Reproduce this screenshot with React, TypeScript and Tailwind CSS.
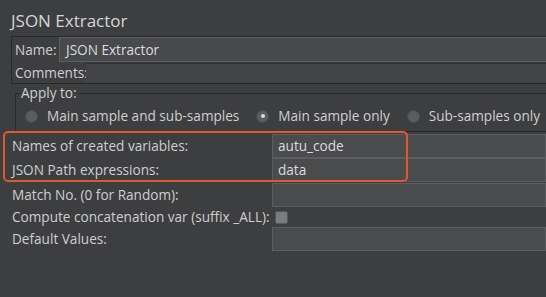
import React from "react";

const Field = ({ value, h = "h-[24px]" }: { value?: string; h?: string }) => (
  <div className={`flex-1 ${h} bg-[#4a4b4d] border border-[#5c5d5f] flex items-center pl-[5px] text-[#dcdcdc]`}>
    {value}
  </div>
);

const Radio = ({ checked }: { checked?: boolean }) => (
  <span className="w-[13px] h-[13px] rounded-full bg-[#5b5c5e] border border-[#4a4b4d] flex items-center justify-center shrink-0">
    {checked && <span className="w-[4px] h-[4px] rounded-full bg-[#d8d8d8]" />}
  </span>
);

export default function App() {
  return (
    <div
      className="w-[546px] h-[297px] bg-[#3d3e40] overflow-hidden relative text-[#cfcfcf] text-[13.6px] whitespace-nowrap"
      style={{ fontFamily: '"Open Sans", "DejaVu Sans", sans-serif' }}
    >
      <div className="h-[36px] pl-[11px] pt-[7px] text-[17px] leading-[28px] text-[#d6d6d6]">JSON Extractor</div>

      <div className="ml-[11px] w-[560px] h-[48px] border border-[#28292b] flex flex-col">
        <div className="h-[26px] flex items-center">
          <span className="pl-[3px] w-[47px] shrink-0">Name:</span>
          <div className="flex-1 h-[25px] bg-[#48494b] border border-[#5c5d5f] flex items-center pl-[6px] text-[#dcdcdc]">JSON Extractor</div>
        </div>
        <div className="flex-1 flex items-center">
          <span className="pl-[3px] w-[74px] shrink-0">Comments:</span>
          <div className="flex-1 h-[19px] bg-[#434446] border-t border-[#2f3032]" />
        </div>
      </div>

      <div className="mt-[9px] ml-[15px] w-[560px] h-[39px] border border-[#28292b] relative flex items-center">
        <span className="absolute left-[4px] top-[-10px] px-[1px] bg-[#3d3e40] leading-[18px]">Apply to:</span>
        <div className="flex items-center pl-[9px] pt-[8px] gap-[9px]">
          <Radio />
          <span className="mr-[8px]">Main sample and sub-samples</span>
          <Radio checked />
          <span className="mr-[8px]">Main sample only</span>
          <Radio />
          <span>Sub-samples only</span>
        </div>
      </div>

      <div className="mt-[2px] flex flex-col">
        <div className="h-[24px] flex items-center">
          <span className="pl-[12px] w-[272px] shrink-0">Names of created variables:</span>
          <Field value="autu_code" />
        </div>
        <div className="h-[24px] flex items-center">
          <span className="pl-[12px] w-[272px] shrink-0">JSON Path expressions:</span>
          <Field value="data" />
        </div>
        <div className="h-[25px] flex items-center pt-[1px]">
          <span className="pl-[12px] w-[272px] shrink-0">Match No. (0 for Random):</span>
          <Field />
        </div>
        <div className="h-[20px] flex items-center">
          <span className="pl-[12px] w-[275px] shrink-0">Compute concatenation var (suffix _ALL):</span>
          <span className="w-[13px] h-[13px] bg-[#7a7b7d] border border-[#555658] rounded-[2px]" />
        </div>
        <div className="h-[24px] flex items-center">
          <span className="pl-[12px] w-[272px] shrink-0">Default Values:</span>
          <Field />
        </div>
      </div>

      <div className="absolute left-[3px] top-[131px] w-[405px] h-[51px] border-2 border-[#e2572c] rounded-[5px]" />
    </div>
  );
}
